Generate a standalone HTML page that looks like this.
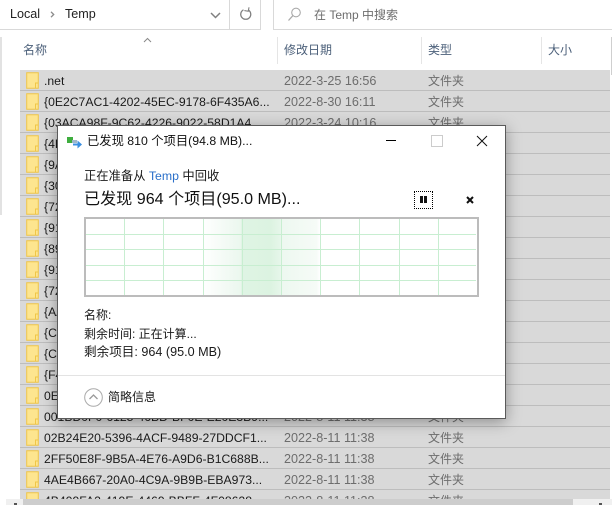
<!DOCTYPE html>
<html><head><meta charset="utf-8">
<style>
html,body{margin:0;padding:0;overflow:hidden}
html{width:612px;height:505px}
body{width:612px;height:505px;background:#fff;position:relative;font-family:"Liberation Sans","Noto Sans CJK SC",sans-serif;font-size:12px;color:#1a1a1a}
.a{position:absolute;white-space:nowrap}
.row{position:absolute;left:20px;width:590px;height:20px;background:#d9d9d9;border-bottom:1px solid #bdbdbd}
.row .n{position:absolute;left:24px;top:3px;line-height:16px;font-size:12.2px;color:#1a1a1a;white-space:nowrap}
.row .d{position:absolute;left:264px;top:3px;line-height:16px;font-size:12.6px;color:#6d6d6d;white-space:nowrap}
.row .t{position:absolute;left:408px;top:3px;line-height:16px;font-size:12px;color:#6d6d6d;white-space:nowrap}
.row svg{position:absolute;left:6px;top:2px}
.h{position:absolute;top:42px;line-height:16px;font-size:12px;color:#4c607a;white-space:nowrap}
.sep{position:absolute;top:37px;width:1px;height:27px;background:#e5e5e5}
</style></head><body>
<!-- address bar -->
<div class="a" style="left:0;top:29px;width:260px;height:1px;background:#d9d9d9"></div>
<div class="a" style="left:229px;top:0;width:1px;height:29px;background:#d9d9d9"></div>
<div class="a" style="left:260px;top:0;width:1px;height:30px;background:#d9d9d9"></div>
<div class="a" style="left:273px;top:0;width:1px;height:30px;background:#d9d9d9"></div>
<div class="a" style="left:273px;top:29px;width:339px;height:1px;background:#d9d9d9"></div>
<div class="a" style="left:10px;top:6px;line-height:16px;font-size:12.6px;color:#222">Local</div>
<svg class="a" style="left:50px;top:11px" width="5" height="7"><path d="M1 .8 L3.700 3.500 L1 6.200" fill="none" stroke="#8a8a8a" stroke-width="1.300"/></svg>
<div class="a" style="left:65px;top:6px;line-height:16px;font-size:12.6px;color:#222">Temp</div>
<svg class="a" style="left:210px;top:12px" width="11" height="7"><path d="M1 1 L5.500 5.500 L10 1" fill="none" stroke="#808080" stroke-width="1.500"/></svg>
<svg class="a" style="left:239px;top:6px" width="14" height="16"><path d="M4.500 3.800 A5 5 0 1 0 9 3.800" fill="none" stroke="#808080" stroke-width="1.300"/><path d="M9.500 1 L9.500 5 L5.500 5" fill="none" stroke="#808080" stroke-width="1.100" transform="rotate(10 8 4)"/></svg>
<svg class="a" style="left:287px;top:7px" width="15" height="15"><circle cx="9" cy="5.500" r="4.300" fill="none" stroke="#aaa" stroke-width="1.100"/><path d="M5.800 8.700 L1.500 13.500" stroke="#aaa" stroke-width="1.300"/></svg>
<div class="a" style="left:314px;top:7px;line-height:16px;font-size:12px;color:#6d6d6d">在 Temp 中搜索</div>
<!-- header -->
<svg class="a" style="left:143px;top:37px" width="9" height="6"><path d="M1 5 L4.500 1.500 L8 5" fill="none" stroke="#888" stroke-width="1"/></svg>
<div class="h" style="left:23px">名称</div>
<div class="sep" style="left:277px"></div>
<div class="h" style="left:284px">修改日期</div>
<div class="sep" style="left:421px"></div>
<div class="h" style="left:428px">类型</div>
<div class="sep" style="left:541px"></div>
<div class="h" style="left:548px">大小</div>
<div class="a" style="left:0;top:37px;width:2px;height:178px;background:#e2e2e2"></div>
<div class="a" style="left:611px;top:37px;width:1px;height:38px;background:#cfcfcf"></div>
<!-- rows -->
<div id="rows">
<div class="row" style="top:70px"><svg width="14" height="17"><path d="M.7.700H12.300V16.300H.7Z" fill="#fde58f" stroke="#f0c647"/><path d="M9.500 16V11H12.500" fill="none" stroke="#f0c647"/></svg><span class="n">.net</span><span class="d">2022-3-25 16:56</span><span class="t">文件夹</span></div>
<div class="row" style="top:91px"><svg width="14" height="17"><path d="M.7.700H12.300V16.300H.7Z" fill="#fde58f" stroke="#f0c647"/><path d="M9.500 16V11H12.500" fill="none" stroke="#f0c647"/></svg><span class="n">{0E2C7AC1-4202-45EC-9178-6F435A6...</span><span class="d">2022-8-30 16:11</span><span class="t">文件夹</span></div>
<div class="row" style="top:112px"><svg width="14" height="17"><path d="M.7.700H12.300V16.300H.7Z" fill="#fde58f" stroke="#f0c647"/><path d="M9.500 16V11H12.500" fill="none" stroke="#f0c647"/></svg><span class="n">{03ACA98F-9C62-4226-9022-58D1A4...</span><span class="d">2022-3-24 10:16</span><span class="t">文件夹</span></div>
<div class="row" style="top:133px"><svg width="14" height="17"><path d="M.7.700H12.300V16.300H.7Z" fill="#fde58f" stroke="#f0c647"/><path d="M9.500 16V11H12.500" fill="none" stroke="#f0c647"/></svg><span class="n">{4B</span></div>
<div class="row" style="top:154px"><svg width="14" height="17"><path d="M.7.700H12.300V16.300H.7Z" fill="#fde58f" stroke="#f0c647"/><path d="M9.500 16V11H12.500" fill="none" stroke="#f0c647"/></svg><span class="n">{9A</span></div>
<div class="row" style="top:175px"><svg width="14" height="17"><path d="M.7.700H12.300V16.300H.7Z" fill="#fde58f" stroke="#f0c647"/><path d="M9.500 16V11H12.500" fill="none" stroke="#f0c647"/></svg><span class="n">{30</span></div>
<div class="row" style="top:196px"><svg width="14" height="17"><path d="M.7.700H12.300V16.300H.7Z" fill="#fde58f" stroke="#f0c647"/><path d="M9.500 16V11H12.500" fill="none" stroke="#f0c647"/></svg><span class="n">{72</span></div>
<div class="row" style="top:217px"><svg width="14" height="17"><path d="M.7.700H12.300V16.300H.7Z" fill="#fde58f" stroke="#f0c647"/><path d="M9.500 16V11H12.500" fill="none" stroke="#f0c647"/></svg><span class="n">{91</span></div>
<div class="row" style="top:238px"><svg width="14" height="17"><path d="M.7.700H12.300V16.300H.7Z" fill="#fde58f" stroke="#f0c647"/><path d="M9.500 16V11H12.500" fill="none" stroke="#f0c647"/></svg><span class="n">{89</span></div>
<div class="row" style="top:259px"><svg width="14" height="17"><path d="M.7.700H12.300V16.300H.7Z" fill="#fde58f" stroke="#f0c647"/><path d="M9.500 16V11H12.500" fill="none" stroke="#f0c647"/></svg><span class="n">{91</span></div>
<div class="row" style="top:280px"><svg width="14" height="17"><path d="M.7.700H12.300V16.300H.7Z" fill="#fde58f" stroke="#f0c647"/><path d="M9.500 16V11H12.500" fill="none" stroke="#f0c647"/></svg><span class="n">{72</span></div>
<div class="row" style="top:301px"><svg width="14" height="17"><path d="M.7.700H12.300V16.300H.7Z" fill="#fde58f" stroke="#f0c647"/><path d="M9.500 16V11H12.500" fill="none" stroke="#f0c647"/></svg><span class="n">{AA</span></div>
<div class="row" style="top:322px"><svg width="14" height="17"><path d="M.7.700H12.300V16.300H.7Z" fill="#fde58f" stroke="#f0c647"/><path d="M9.500 16V11H12.500" fill="none" stroke="#f0c647"/></svg><span class="n">{C2</span></div>
<div class="row" style="top:343px"><svg width="14" height="17"><path d="M.7.700H12.300V16.300H.7Z" fill="#fde58f" stroke="#f0c647"/><path d="M9.500 16V11H12.500" fill="none" stroke="#f0c647"/></svg><span class="n">{C0</span></div>
<div class="row" style="top:364px"><svg width="14" height="17"><path d="M.7.700H12.300V16.300H.7Z" fill="#fde58f" stroke="#f0c647"/><path d="M9.500 16V11H12.500" fill="none" stroke="#f0c647"/></svg><span class="n">{F4</span></div>
<div class="row" style="top:385px"><svg width="14" height="17"><path d="M.7.700H12.300V16.300H.7Z" fill="#fde58f" stroke="#f0c647"/><path d="M9.500 16V11H12.500" fill="none" stroke="#f0c647"/></svg><span class="n">0E</span></div>
<div class="row" style="top:406px"><svg width="14" height="17"><path d="M.7.700H12.300V16.300H.7Z" fill="#fde58f" stroke="#f0c647"/><path d="M9.500 16V11H12.500" fill="none" stroke="#f0c647"/></svg><span class="n">001BD0F0-6125-46BD-BF0E-E20E3B9...</span><span class="d">2022-8-11 11:38</span><span class="t">文件夹</span></div>
<div class="row" style="top:427px"><svg width="14" height="17"><path d="M.7.700H12.300V16.300H.7Z" fill="#fde58f" stroke="#f0c647"/><path d="M9.500 16V11H12.500" fill="none" stroke="#f0c647"/></svg><span class="n">02B24E20-5396-4ACF-9489-27DDCF1...</span><span class="d">2022-8-11 11:38</span><span class="t">文件夹</span></div>
<div class="row" style="top:448px"><svg width="14" height="17"><path d="M.7.700H12.300V16.300H.7Z" fill="#fde58f" stroke="#f0c647"/><path d="M9.500 16V11H12.500" fill="none" stroke="#f0c647"/></svg><span class="n">2FF50E8F-9B5A-4E76-A9D6-B1C688B...</span><span class="d">2022-8-11 11:38</span><span class="t">文件夹</span></div>
<div class="row" style="top:469px"><svg width="14" height="17"><path d="M.7.700H12.300V16.300H.7Z" fill="#fde58f" stroke="#f0c647"/><path d="M9.500 16V11H12.500" fill="none" stroke="#f0c647"/></svg><span class="n">4AE4B667-20A0-4C9A-9B9B-EBA973...</span><span class="d">2022-8-11 11:38</span><span class="t">文件夹</span></div>
<div class="row" style="top:490px;height:9px;border-bottom:0;overflow:hidden"><svg width="14" height="17"><path d="M.7.700H12.300V16.300H.7Z" fill="#fde58f" stroke="#f0c647"/><path d="M9.500 16V11H12.500" fill="none" stroke="#f0c647"/></svg><span class="n">4B409FA2-419E-4469-BBFF-4F08628...</span><span class="d">2022-8-11 11:38</span><span class="t">文件夹</span></div>
</div>
<!-- bottom scrollbar -->
<div class="a" style="left:6px;top:499px;width:606px;height:6px;background:#f0f0f0"></div>
<div class="a" style="left:23px;top:499px;width:550px;height:6px;background:#cdcdcd"></div>
<div class="a" style="left:14px;top:503px;width:3px;height:2px;background:#555"></div>
<div class="a" style="left:599px;top:503px;width:3px;height:2px;background:#555"></div>
<!-- dialog -->
<div class="a" style="left:57px;top:125px;width:449px;height:294px;background:#fff;border:1px solid #5a5a5a;box-sizing:border-box;box-shadow:0 3px 14px rgba(0,0,0,.35)"></div>
<svg class="a" style="left:67px;top:137px" width="16" height="12"><rect x="0" y="0" width="6" height="6" fill="#3fae3f"/><rect x="5" y="3" width="5" height="3" fill="#9fb7c9"/><path d="M6 6.500H10.500V3.500L15 7.500L10.500 11.500V8.500H6Z" fill="#3b8fe0"/></svg>
<div class="a" style="left:87px;top:133px;line-height:16px;font-size:12.300px;color:#111">已发现 810 个项目(94.8 MB)...</div>
<div class="a" style="left:386px;top:140px;width:10px;height:1px;background:#000"></div>
<div class="a" style="left:431px;top:135px;width:10px;height:10px;border:1px solid #ccc"></div>
<svg class="a" style="left:476px;top:135px" width="12" height="12"><path d="M1 1L11 11M11 1L1 11" stroke="#111" stroke-width="1"/></svg>
<div class="a" style="left:84px;top:168px;line-height:16px;font-size:12.300px;color:#1a1a1a">正在准备从 <span style="color:#2a6fc9">Temp</span> 中回收</div>
<div class="a" style="left:84px;top:189px;line-height:20px;font-size:16.100px;color:#111">已发现 964 个项目(95.0 MB)...</div>
<div class="a" style="left:414px;top:191px;width:19px;height:18px;border:1px dotted #000;box-sizing:border-box"></div>
<div class="a" style="left:420px;top:196px;width:3px;height:7px;background:#111"></div>
<div class="a" style="left:424px;top:196px;width:3px;height:7px;background:#111"></div>
<svg class="a" style="left:466px;top:196px" width="8" height="8"><path d="M1 1L7 7M7 1L1 7" stroke="#111" stroke-width="2"/></svg>
<!-- graph -->
<svg class="a" style="left:84px;top:217px" width="396" height="81">
<defs><linearGradient id="g" x1="0" x2="1" y1="0" y2="0"><stop offset="0" stop-color="#fff"/><stop offset=".32" stop-color="#ebf7ee"/><stop offset=".33" stop-color="#dff4e4"/><stop offset=".58" stop-color="#dcf3e1"/><stop offset=".66" stop-color="#e6f6ea"/><stop offset=".67" stop-color="#edf8f0"/><stop offset=".97" stop-color="#f6fbf7"/><stop offset="1" stop-color="#fff"/></linearGradient></defs>
<rect x="1" y="1" width="393" height="78" fill="#fff" stroke="#bcbcbc" stroke-width="2"/>
<rect x="119" y="2" width="117" height="76" fill="url(#g)"/>
<g stroke="#c8eed1" stroke-width="1">
<path d="M40.500 2V78M79.500 2V78M119.500 2V78M158.500 2V78M197.500 2V78M236.500 2V78M275.500 2V78M315.500 2V78M354.500 2V78"/>
<path d="M2 17.500H392M2 32.500H392M2 48.500H392M2 63.500H392"/>
</g>
</svg>
<div class="a" style="left:84px;top:307px;line-height:16px;font-size:12px;color:#1a1a1a">名称:</div>
<div class="a" style="left:84px;top:326px;line-height:16px;font-size:12px;color:#1a1a1a">剩余时间: 正在计算...</div>
<div class="a" style="left:84px;top:344px;line-height:16px;font-size:12.600px;color:#1a1a1a">剩余项目: 964 (95.0 MB)</div>
<div class="a" style="left:58px;top:375px;width:447px;height:1px;background:#e3e3e3"></div>
<svg class="a" style="left:84px;top:388px" width="20" height="20"><circle cx="9.500" cy="9.500" r="8.800" fill="#fff" stroke="#aaa" stroke-width="1"/><path d="M5.500 11L9.500 7L13.500 11" fill="none" stroke="#999" stroke-width="1.300"/></svg>
<div class="a" style="left:108px;top:389px;line-height:16px;font-size:12px;color:#1a1a1a">简略信息</div>
</body></html>
